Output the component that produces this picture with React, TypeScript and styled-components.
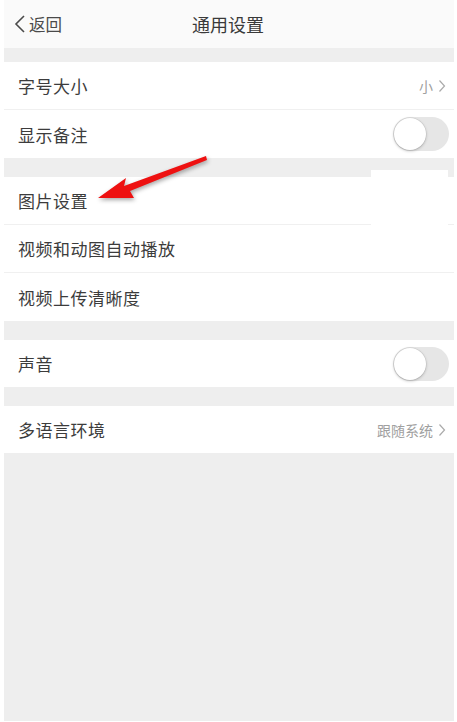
import React from "react";
import styled, { createGlobalStyle } from "styled-components";

const Global = createGlobalStyle`
  html, body { margin: 0; padding: 0; background: #ffffff; }
  body { font-family: "Noto Sans CJK SC", "Noto Sans", sans-serif; }
  * { box-sizing: border-box; }
`;

const Page = styled.div`
  width: 457px;
  height: 722px;
  padding: 0 3px 1px 4px;
  background: #ffffff;
  position: relative;
  overflow: hidden;
`;

const Screen = styled.div`
  height: 100%;
  display: flex;
  flex-direction: column;
  background: #eeeeee;
`;

const Header = styled.div`
  height: 48px;
  flex: none;
  display: grid;
  grid-template-columns: 1fr auto 1fr;
  align-items: center;
  background: #fafafa;
  color: #333333;
`;

const Back = styled.div`
  display: flex;
  align-items: center;
  gap: 3px;
  padding-left: 9px;
  font-size: 16.5px;
  color: #4a4a4a;
`;

const Title = styled.div`
  font-size: 18px;
  color: #3a3a3a;
  margin-left: -2px;
`;

const Gap = styled.div<{ $h: number }>`
  height: ${(p) => p.$h}px;
  flex: none;
`;

const Group = styled.div`
  background: #ffffff;
  flex: none;
`;

const Row = styled.div<{ $divider?: boolean; $h?: number }>`
  height: ${(p) => p.$h ?? 48}px;
  display: flex;
  align-items: center;
  justify-content: space-between;
  padding: 0 6px 0 14px;
  border-bottom: ${(p) => (p.$divider ? "1px solid #f0f0f0" : "none")};
`;

const Label = styled.span`
  font-size: 17px;
  color: #3c3c3c;
  letter-spacing: 0.5px;
`;

const Value = styled.span`
  display: flex;
  align-items: center;
  gap: 5px;
  font-size: 14px;
  color: #a0a0a0;
  margin-right: 2px;
`;

const Toggle = styled.div`
  width: 56px;
  height: 34px;
  border-radius: 17px;
  background: #e6e6e6;
  position: relative;
  margin-right: -1px;
`;

const Knob = styled.div`
  position: absolute;
  left: 1px;
  top: 1px;
  width: 32px;
  height: 32px;
  border-radius: 50%;
  background: #ffffff;
  box-shadow: 0 1px 3px rgba(0, 0, 0, 0.25), 0 0 0 0.5px rgba(0, 0, 0, 0.08);
`;

const Filler = styled.div`
  flex: 1;
`;

const Patch = styled.div`
  position: absolute;
  left: 371px;
  top: 170px;
  width: 77px;
  height: 55px;
  background: #ffffff;
`;

const ArrowLayer = styled.svg`
  position: absolute;
  left: 90px;
  top: 148px;
  filter: drop-shadow(1px 2px 2px rgba(0, 0, 0, 0.35));
`;

const Chevron = () => (
  <svg width="13" height="20" viewBox="0 0 13 20">
    <path d="M11 2 L3 10 L11 18" fill="none" stroke="#4a4a4a" strokeWidth="1.6" />
  </svg>
);

const SmallChevron = () => (
  <svg width="8" height="14" viewBox="0 0 8 14">
    <path d="M1.5 1.5 L6.5 7 L1.5 12.5" fill="none" stroke="#aaa" strokeWidth="1.2" />
  </svg>
);

const Switch = () => (
  <Toggle>
    <Knob />
  </Toggle>
);

export default function App() {
  return (
    <>
      <Global />
      <Page>
        <Screen>
          <Header>
            <Back>
              <Chevron />
              <span>返回</span>
            </Back>
            <Title>通用设置</Title>
            <div />
          </Header>
          <Gap $h={14} />
          <Group>
            <Row $divider>
              <Label>字号大小</Label>
              <Value>
                小<SmallChevron />
              </Value>
            </Row>
            <Row>
              <Label>显示备注</Label>
              <Switch />
            </Row>
          </Group>
          <Gap $h={19} />
          <Group>
            <Row $divider>
              <Label>图片设置</Label>
            </Row>
            <Row $divider>
              <Label>视频和动图自动播放</Label>
            </Row>
            <Row>
              <Label>视频上传清晰度</Label>
            </Row>
          </Group>
          <Gap $h={19} />
          <Group>
            <Row $h={47}>
              <Label>声音</Label>
              <Switch />
            </Row>
          </Group>
          <Gap $h={19} />
          <Group>
            <Row $h={47}>
              <Label>多语言环境</Label>
              <Value>
                跟随系统<SmallChevron />
              </Value>
            </Row>
          </Group>
          <Filler />
        </Screen>
        <Patch />
        <ArrowLayer width="130" height="60" viewBox="0 0 130 60">
          <path
            d="M116 8 L34 38 L36 30 L8 50 L44 50 L40 43 L117 12 Z"
            fill="#ee1111"
          />
        </ArrowLayer>
      </Page>
    </>
  );
}
